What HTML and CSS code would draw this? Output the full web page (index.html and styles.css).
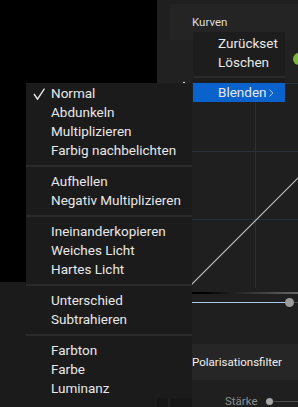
FILE: index.html
```html
<!DOCTYPE html>
<html lang="de">
<head>
    <meta charset="UTF-8">
    <meta name="viewport" content="width=device-width, initial-scale=1.0">
    <title>Kurven - Blenden</title>
    <link rel="stylesheet" href="styles.css">
</head>
<body>
    <div class="app">
        <div class="left">
            <div class="viewer"></div>
            <div class="filmstrip"></div>
        </div>

        <div class="panel">
            <div class="module-header">Kurven</div>
            <div class="toolbar">
                <span class="marker"></span>
                <span class="toggle"></span>
            </div>

            <!-- Kurvendiagramm -->
            <svg class="graph" width="205" height="205" viewBox="0 0 205 205">
                <g stroke="#29303a" stroke-width="1">
                    <line x1="0" y1="0.5" x2="205" y2="0.5"/>
                    <line x1="0" y1="68.5" x2="205" y2="68.5"/>
                    <line x1="0" y1="136.5" x2="205" y2="136.5"/>
                    <line x1="67.5" y1="0" x2="67.5" y2="205"/>
                    <line x1="136.5" y1="0" x2="136.5" y2="205"/>
                </g>
                <line x1="0" y1="205" x2="205" y2="0" stroke="#c4c4c4" stroke-width="1.2"/>
            </svg>
            <div class="gradient"></div>
            <div class="slider">
                <span class="fill"></span>
                <span class="knob"></span>
                <span class="rest"></span>
            </div>

            <div class="module-header second">Polarisationsfilter</div>
            <div class="param">
                <span class="slot"></span>
                <span class="slot wide"></span>
                <span class="param-label">Stärke</span>
                <span class="knob small"></span>
                <span class="rest"></span>
            </div>
        </div>
    </div>

    <ul class="menu main-menu">
        <li class="item">
            <svg class="check" width="12" height="12" viewBox="0 0 12 12">
                <polyline points="1,6 4.5,11.2 11.5,0.6" fill="none" stroke="#e8e8e8" stroke-width="1.4"/>
            </svg>
            Normal
        </li>
        <li class="item"><span class="check"></span>Abdunkeln</li>
        <li class="item"><span class="check"></span>Multiplizieren</li>
        <li class="item"><span class="check"></span>Farbig nachbelichten</li>
        <li class="sep"></li>
        <li class="item"><span class="check"></span>Aufhellen</li>
        <li class="item"><span class="check"></span>Negativ Multiplizieren</li>
        <li class="sep"></li>
        <li class="item"><span class="check"></span>Ineinanderkopieren</li>
        <li class="item"><span class="check"></span>Weiches Licht</li>
        <li class="item"><span class="check"></span>Hartes Licht</li>
        <li class="sep"></li>
        <li class="item"><span class="check"></span>Unterschied</li>
        <li class="item"><span class="check"></span>Subtrahieren</li>
        <li class="sep"></li>
        <li class="item"><span class="check"></span>Farbton</li>
        <li class="item"><span class="check"></span>Farbe</li>
        <li class="item"><span class="check"></span>Luminanz</li>
    </ul>

    <ul class="menu sub-menu">
        <li class="item"><span class="check"></span>Zurückset</li>
        <li class="item"><span class="check"></span>Löschen</li>
        <li class="sep small"></li>
        <li class="item active">
            <span class="check"></span>Blenden
            <svg class="chevron" width="5" height="8" viewBox="0 0 5 8">
                <polyline points="0.6,0.6 3.8,4 0.6,7.4" fill="none" stroke="#b4cdf0" stroke-width="1"/>
            </svg>
        </li>
    </ul>
</body>
</html>
```

FILE: styles.css
```css
body {
    margin: 0;
    width: 298px;
    height: 407px;
    overflow: hidden;
    background: #1c1c1c;
    font-family: 'Roboto', 'Noto Sans', sans-serif;
    color: #e8e8e8;
    position: relative;
}

.app {
    display: grid;
    grid-template-columns: 157px 141px;
    height: 407px;
}

.left {
    display: flex;
    flex-direction: column;
}

.viewer {
    height: 282px;
    background: #000;
}

.filmstrip {
    flex: 1;
    background: #1b1b1b;
}

.panel {
    background: #1f1f1f;
    overflow: hidden;
    display: flex;
    flex-direction: column;
}

.module-header {
    margin: 4px 0 0 13px;
    height: 36px;
    line-height: 36px;
    padding-left: 22px;
    background: #242424;
    font-size: 11.5px;
    color: #dedede;
    white-space: nowrap;
    flex-shrink: 0;
}

.module-header.second {
    margin-top: 37px;
    background: #262626;
    color: #f0f0f0;
}

.toolbar {
    height: 43px;
    display: flex;
    flex-shrink: 0;
    background: #212121;
}

.marker {
    align-self: flex-end;
    margin: 0 0 -1px 26px;
    width: 2px;
    height: 2px;
    background: #e0e0e0;
}

.toggle {
    margin: 13px -7px 0 auto;
    width: 12px;
    height: 12px;
    border-radius: 50%;
    background: #7cb342;
    flex-shrink: 0;
}

.graph {
    display: block;
    margin-left: 31px;
    flex-shrink: 0;
    background: #1f1f1f;
}

.gradient {
    margin: 4px 0 0 31px;
    width: 205px;
    height: 2px;
    background: linear-gradient(to right, #000 8%, #d0d0d0);
    flex-shrink: 0;
}

.slider {
    margin: 4px 0 0 31px;
    height: 9px;
    display: flex;
    align-items: center;
    flex-shrink: 0;
}

.slider .fill {
    width: 97px;
    height: 1px;
    background: #a9c9ea;
    flex-shrink: 0;
}

.knob {
    width: 9px;
    height: 9px;
    border-radius: 50%;
    background: #9b9b9b;
    flex-shrink: 0;
}

.knob.small {
    width: 7px;
    height: 7px;
    margin-left: 8px;
    background: #a8a8a8;
}

.rest {
    flex: 1;
    min-width: 40px;
    height: 1px;
    background: #4a4a4a;
}

.param {
    margin-top: 14px;
    height: 14px;
    display: flex;
    align-items: center;
    flex-shrink: 0;
    font-size: 11.5px;
    color: #8e8e8e;
}

.slot {
    align-self: flex-end;
    width: 11px;
    height: 10px;
    background: #161616;
    flex-shrink: 0;
}

.slot.wide {
    width: 22px;
    margin-left: 2px;
}

.param-label {
    margin-left: 33px;
}

/* Kontextmenüs */
.menu {
    position: absolute;
    margin: 0;
    padding: 1px 0 0;
    list-style: none;
    background: #1b1b1b;
    font-size: 13.5px;
}

.main-menu {
    left: 26px;
    top: 83px;
    width: 166px;
}

.sub-menu {
    left: 193px;
    top: 32px;
    width: 92px;
    padding-top: 2px;
    background: #1d1d1d;
}

.item {
    height: 19px;
    line-height: 19px;
    padding-left: 7px;
    display: flex;
    align-items: center;
    white-space: nowrap;
}

.check {
    width: 12px;
    height: 12px;
    margin-right: 6px;
    flex-shrink: 0;
}

.sep {
    height: 2px;
    margin: 5px 0;
    background: #2a2a2a;
}

.sep.small {
    margin: 4px 0 5px;
}

.item.active {
    background: #0a63cc;
}

.chevron {
    margin-left: 2px;
}
```
